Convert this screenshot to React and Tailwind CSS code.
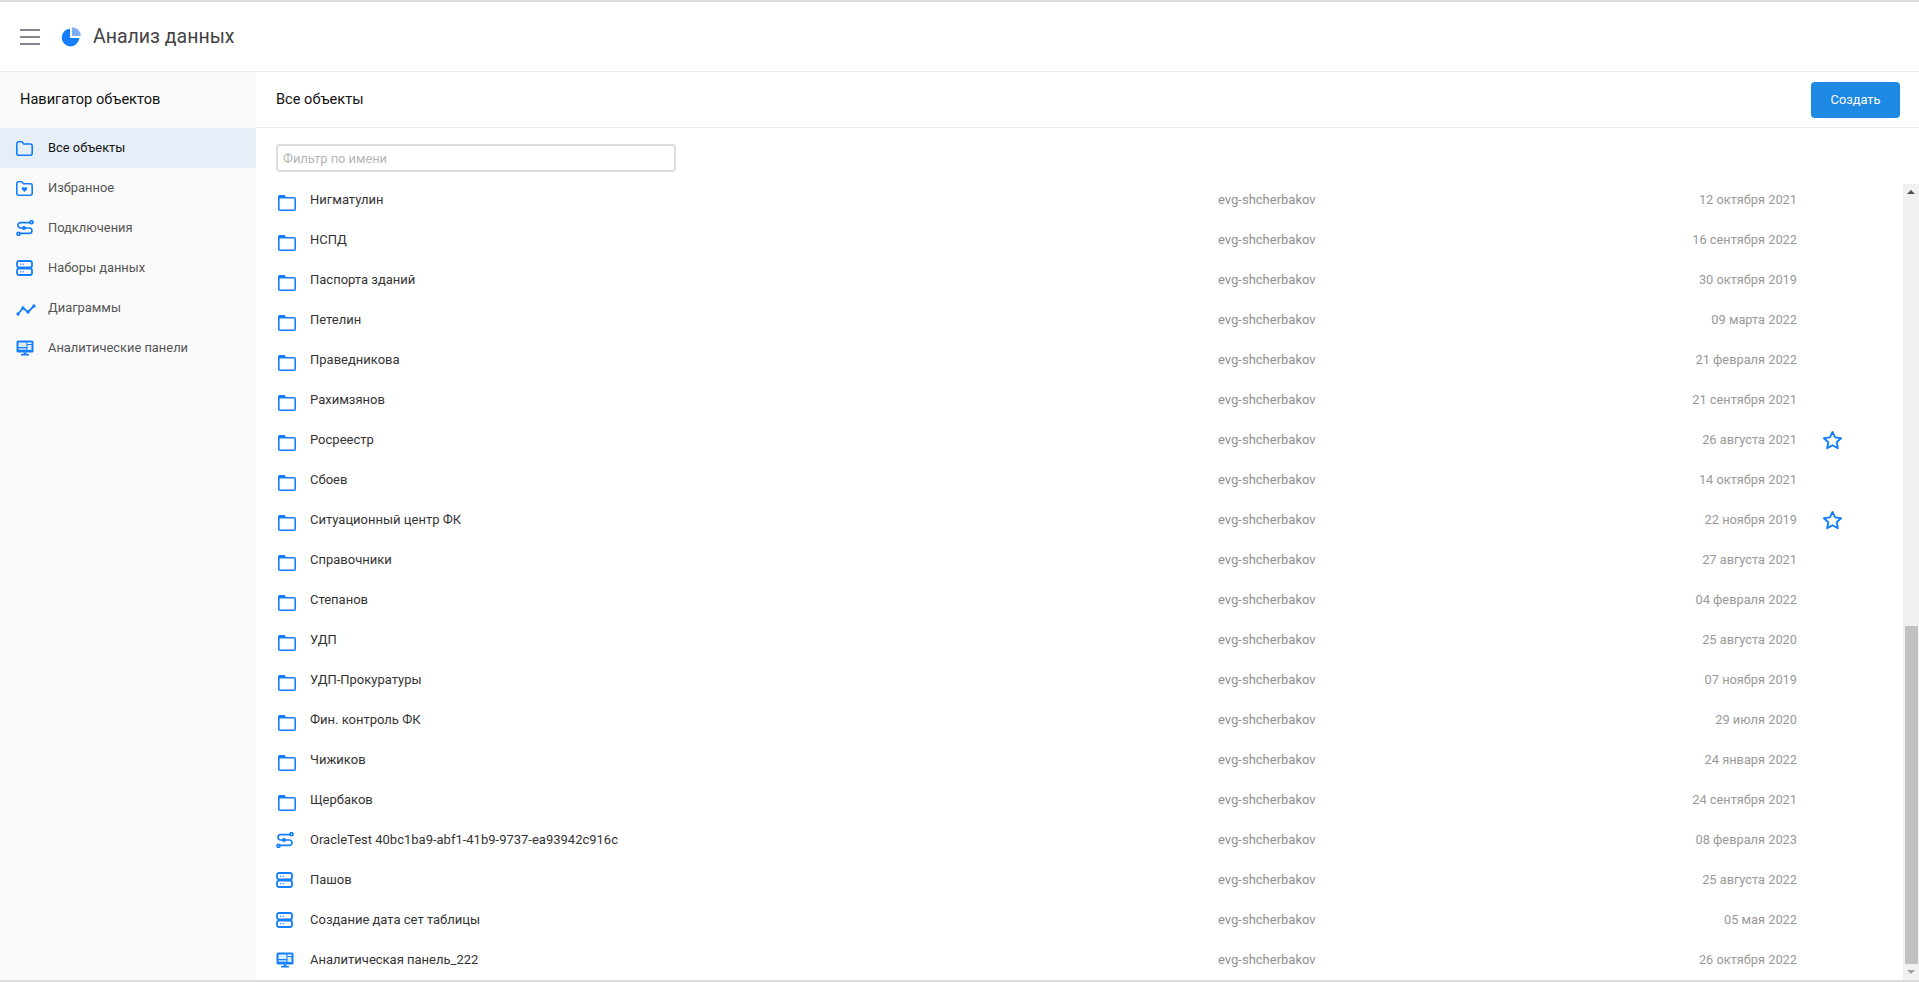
const BLUE = "#157EFB";

// Иконки типов объектов
function NavFolderIcon() {
  return (
    <svg viewBox="0 0 17 15" className="w-[17px] h-[15px]" fill="none" stroke={BLUE} strokeWidth="1.6" strokeLinejoin="round">
      <path d="M.8 2.800A2 2 0 0 1 2.800.8h3l2 2.200h6.400a2 2 0 0 1 2 2v7.200a2 2 0 0 1-2 2H2.800a2 2 0 0 1-2-2z" />
    </svg>
  );
}

function ListFolderIcon() {
  return (
    <svg viewBox="0 0 18 16" className="w-[18px] h-[16px] mt-[6px] ml-[2px]" fill="none" stroke={BLUE} strokeWidth="1.6" strokeLinejoin="round">
      <path d="M.8 1.800a1 1 0 0 1 1-1h4.400l1.600 2h8.400a1 1 0 0 1 1 1v10.400a1 1 0 0 1-1 1H1.800a1 1 0 0 1-1-1z" />
      <path d="M1 1h5l1.500 2.500H1z" fill={BLUE} stroke="none" />
    </svg>
  );
}

function FavIcon() {
  return (
    <svg viewBox="0 0 17 15" className="w-[17px] h-[15px]" fill="none" stroke={BLUE} strokeWidth="1.6" strokeLinejoin="round">
      <path d="M.8 2.400A1.600 1.600 0 0 1 2.400.8h3.200l2 2h7a1.600 1.600 0 0 1 1.600 1.600v8.200a1.600 1.600 0 0 1-1.600 1.600H2.400a1.600 1.600 0 0 1-1.600-1.600z" />
      <path d="M8.500 11 5.800 8.200a1.500 1.500 0 0 1 2.700-1.300 1.500 1.500 0 0 1 2.700 1.300z" fill={BLUE} stroke="none" />
    </svg>
  );
}

function ConnIcon() {
  return (
    <svg viewBox="0 0 18 16" className="w-[18px] h-[16px]" fill="none" stroke={BLUE} strokeWidth="1.7" strokeLinecap="round">
      <circle cx="15.500" cy="2.200" r="1.500" />
      <circle cx="2.500" cy="13.800" r="1.500" />
      <path d="M14 2.700H4.200a2.700 2.700 0 0 0 0 5.300h9.600a2.700 2.700 0 0 1 0 5.300H4" />
      <circle cx="8" cy="8" r="2" fill={BLUE} stroke="none" />
    </svg>
  );
}

function DatasetIcon() {
  return (
    <svg viewBox="0 0 17 16" className="w-[17px] h-[16px]" fill="none" stroke={BLUE} strokeWidth="1.800">
      <rect x="1" y="1" width="15" height="6.500" rx="2" />
      <rect x="1" y="8.500" width="15" height="6.500" rx="2" />
      <path d="M4 4.200h1.400M6.500 4.200h1.400M4 11.800h1.400M6.500 11.800h1.400" strokeWidth="1" />
    </svg>
  );
}

function ChartIcon() {
  return (
    <svg viewBox="0 0 20 12" className="w-[20px] h-[12px] mt-[4px]" fill={BLUE} stroke={BLUE} strokeWidth="1.800">
      <path d="M2 10 7 4l5 4 6-6" fill="none" />
      <circle cx="2" cy="10" r="1.700" stroke="none" />
      <circle cx="7" cy="4" r="1.700" stroke="none" />
      <circle cx="12" cy="8" r="1.700" stroke="none" />
      <circle cx="18" cy="2" r="1.700" stroke="none" />
    </svg>
  );
}

function PanelIcon() {
  return (
    <svg viewBox="0 0 18 16" className="w-[18px] h-[16px]">
      <rect x="0.500" y="0.500" width="17" height="12" rx="1.500" fill={BLUE} />
      <rect x="2.500" y="2.500" width="8" height="4.500" fill="#fff" opacity="0.85" />
      <rect x="11.500" y="2.500" width="4" height="1.500" fill="#fff" />
      <rect x="11.500" y="5" width="4" height="5" fill="#fff" opacity="0.85" />
      <rect x="2.500" y="8" width="8" height="2" fill="#fff" opacity="0.6" />
      <path d="M7.500 12.500h3v1.500h2.500v1.500H5V14h2.500z" fill={BLUE} />
    </svg>
  );
}

function StarIcon() {
  return (
    <svg viewBox="0 0 22 21" className="w-[21px] h-[20px]" fill="none" stroke={BLUE} strokeWidth="2" strokeLinejoin="round">
      <path d="m11 2 2.700 5.800 6.300.8-4.600 4.300 1.200 6.200L11 16l-5.600 3.100 1.200-6.200L2 8.600l6.300-.8z" />
    </svg>
  );
}

const navItems = [
  { title: "Все объекты", icon: <NavFolderIcon />, active: true },
  { title: "Избранное", icon: <FavIcon /> },
  { title: "Подключения", icon: <ConnIcon /> },
  { title: "Наборы данных", icon: <DatasetIcon /> },
  { title: "Диаграммы", icon: <ChartIcon /> },
  { title: "Аналитические панели", icon: <PanelIcon /> },
];

const rows = [
  { name: "Нигматулин", date: "12 октября 2021", type: "folder" },
  { name: "НСПД", date: "16 сентября 2022", type: "folder" },
  { name: "Паспорта зданий", date: "30 октября 2019", type: "folder" },
  { name: "Петелин", date: "09 марта 2022", type: "folder" },
  { name: "Праведникова", date: "21 февраля 2022", type: "folder" },
  { name: "Рахимзянов", date: "21 сентября 2021", type: "folder" },
  { name: "Росреестр", date: "26 августа 2021", type: "folder", star: true },
  { name: "Сбоев", date: "14 октября 2021", type: "folder" },
  { name: "Ситуационный центр ФК", date: "22 ноября 2019", type: "folder", star: true },
  { name: "Справочники", date: "27 августа 2021", type: "folder" },
  { name: "Степанов", date: "04 февраля 2022", type: "folder" },
  { name: "УДП", date: "25 августа 2020", type: "folder" },
  { name: "УДП-Прокуратуры", date: "07 ноября 2019", type: "folder" },
  { name: "Фин. контроль ФК", date: "29 июля 2020", type: "folder" },
  { name: "Чижиков", date: "24 января 2022", type: "folder" },
  { name: "Щербаков", date: "24 сентября 2021", type: "folder" },
  { name: "OracleTest 40bc1ba9-abf1-41b9-9737-ea93942c916c", date: "08 февраля 2023", type: "conn" },
  { name: "Пашов", date: "25 августа 2022", type: "dataset" },
  { name: "Создание дата сет таблицы", date: "05 мая 2022", type: "dataset" },
  { name: "Аналитическая панель_222", date: "26 октября 2022", type: "panel" },
];

const rowIcons = {
  folder: <ListFolderIcon />,
  conn: <ConnIcon />,
  dataset: <DatasetIcon />,
  panel: <PanelIcon />,
};

export default function App() {
  return (
    <div className="h-[982px] overflow-hidden flex flex-col bg-white font-['Roboto',sans-serif] border-t-2 border-[#dcdcdc] border-b-2">
      {/* Шапка */}
      <header className="h-[70px] shrink-0 flex items-center border-b border-[#ececec] pl-[20px]">
        <svg viewBox="0 0 20 16" className="w-[20px] h-[16px]" stroke="#858592" strokeWidth="2">
          <path d="M0 1h20M0 8h20M0 15h20" />
        </svg>
        <svg viewBox="0 0 20 20" className="w-[20px] h-[20px] ml-[21px]">
          <path d="M9 1.800a8.800 8.800 0 1 0 9.300 9.300H9z" fill={BLUE} />
          <path d="M11 0.200a8.800 8.800 0 0 1 8.800 8.800H11z" fill="#7FAEF5" />
        </svg>
        <span className="ml-[12px] text-[19.500px] text-[#444444]">Анализ данных</span>
      </header>

      <div className="flex-1 flex min-h-0">
        {/* Навигатор */}
        <aside className="w-[256px] shrink-0 bg-[#fafafa]">
          <div className="h-[56px] flex items-center pl-[20px] text-[14.600px] text-[#111]">Навигатор объектов</div>
          {navItems.map((item) => (
            <div key={item.title} className={`h-[40px] flex items-center pl-[16px] text-[12.900px] ${item.active ? "bg-[#e6eff8] text-[#111]" : "text-[#555]"}`}>
              <span className="w-[32px] flex items-center">{item.icon}</span>
              {item.title}
            </div>
          ))}
        </aside>

        {/* Основная часть */}
        <main className="flex-1 flex flex-col min-w-0">
          <div className="h-[56px] shrink-0 flex items-center border-b border-[#ececec] pt-[1px] pl-[20px] pr-[19px]">
            <span className="text-[14.600px] text-[#111]">Все объекты</span>
            <button className="ml-auto w-[89px] h-[36px] rounded-[4px] bg-[#1E88E5] text-white text-[12.800px]">Создать</button>
          </div>
          <div className="h-[56px] shrink-0 flex items-center pt-[4px] pl-[20px]">
            <input
              className="w-[400px] h-[28px] border-2 border-[#dddddd] rounded-[4px] px-[5px] text-[12.800px] outline-none placeholder:text-[#b5b5b5]"
              placeholder="Фильтр по имени"
            />
          </div>
          <div className="flex-1 flex min-h-0">
            <div className="flex-1 min-w-0 overflow-hidden">
              <div className="-mt-[4px]">
                {rows.map((row) => (
                  <div key={row.name} className="h-[40px] flex items-center pl-[20px] text-[13px]">
                    <span className="w-[34px] flex items-center">{rowIcons[row.type]}</span>
                    <span className="w-[908px] text-[#333]">{row.name}</span>
                    <span className="w-[150px] text-[#8f8f8f]">evg-shcherbakov</span>
                    <span className="w-[429px] text-right text-[#999] text-[12.800px]">{row.date}</span>
                    <span className="w-[71px] flex justify-center">{row.star && <StarIcon />}</span>
                  </div>
                ))}
              </div>
            </div>
            {/* Полоса прокрутки */}
            <div className="w-[16px] shrink-0 bg-[#f1f1f1] flex flex-col items-center">
              <div className="h-[16px] shrink-0 flex items-center justify-center">
                <div className="w-0 h-0 border-x-[4px] border-x-transparent border-b-[4px] border-b-[#505050]" />
              </div>
              <div className="flex-1" />
              <div className="w-[13px] h-[338px] shrink-0 bg-[#c1c1c1]" />
              <div className="h-[16px] shrink-0 flex items-center justify-center">
                <div className="w-0 h-0 border-x-[4px] border-x-transparent border-t-[4px] border-t-[#a0a0a0]" />
              </div>
            </div>
          </div>
        </main>
      </div>
    </div>
  );
}
